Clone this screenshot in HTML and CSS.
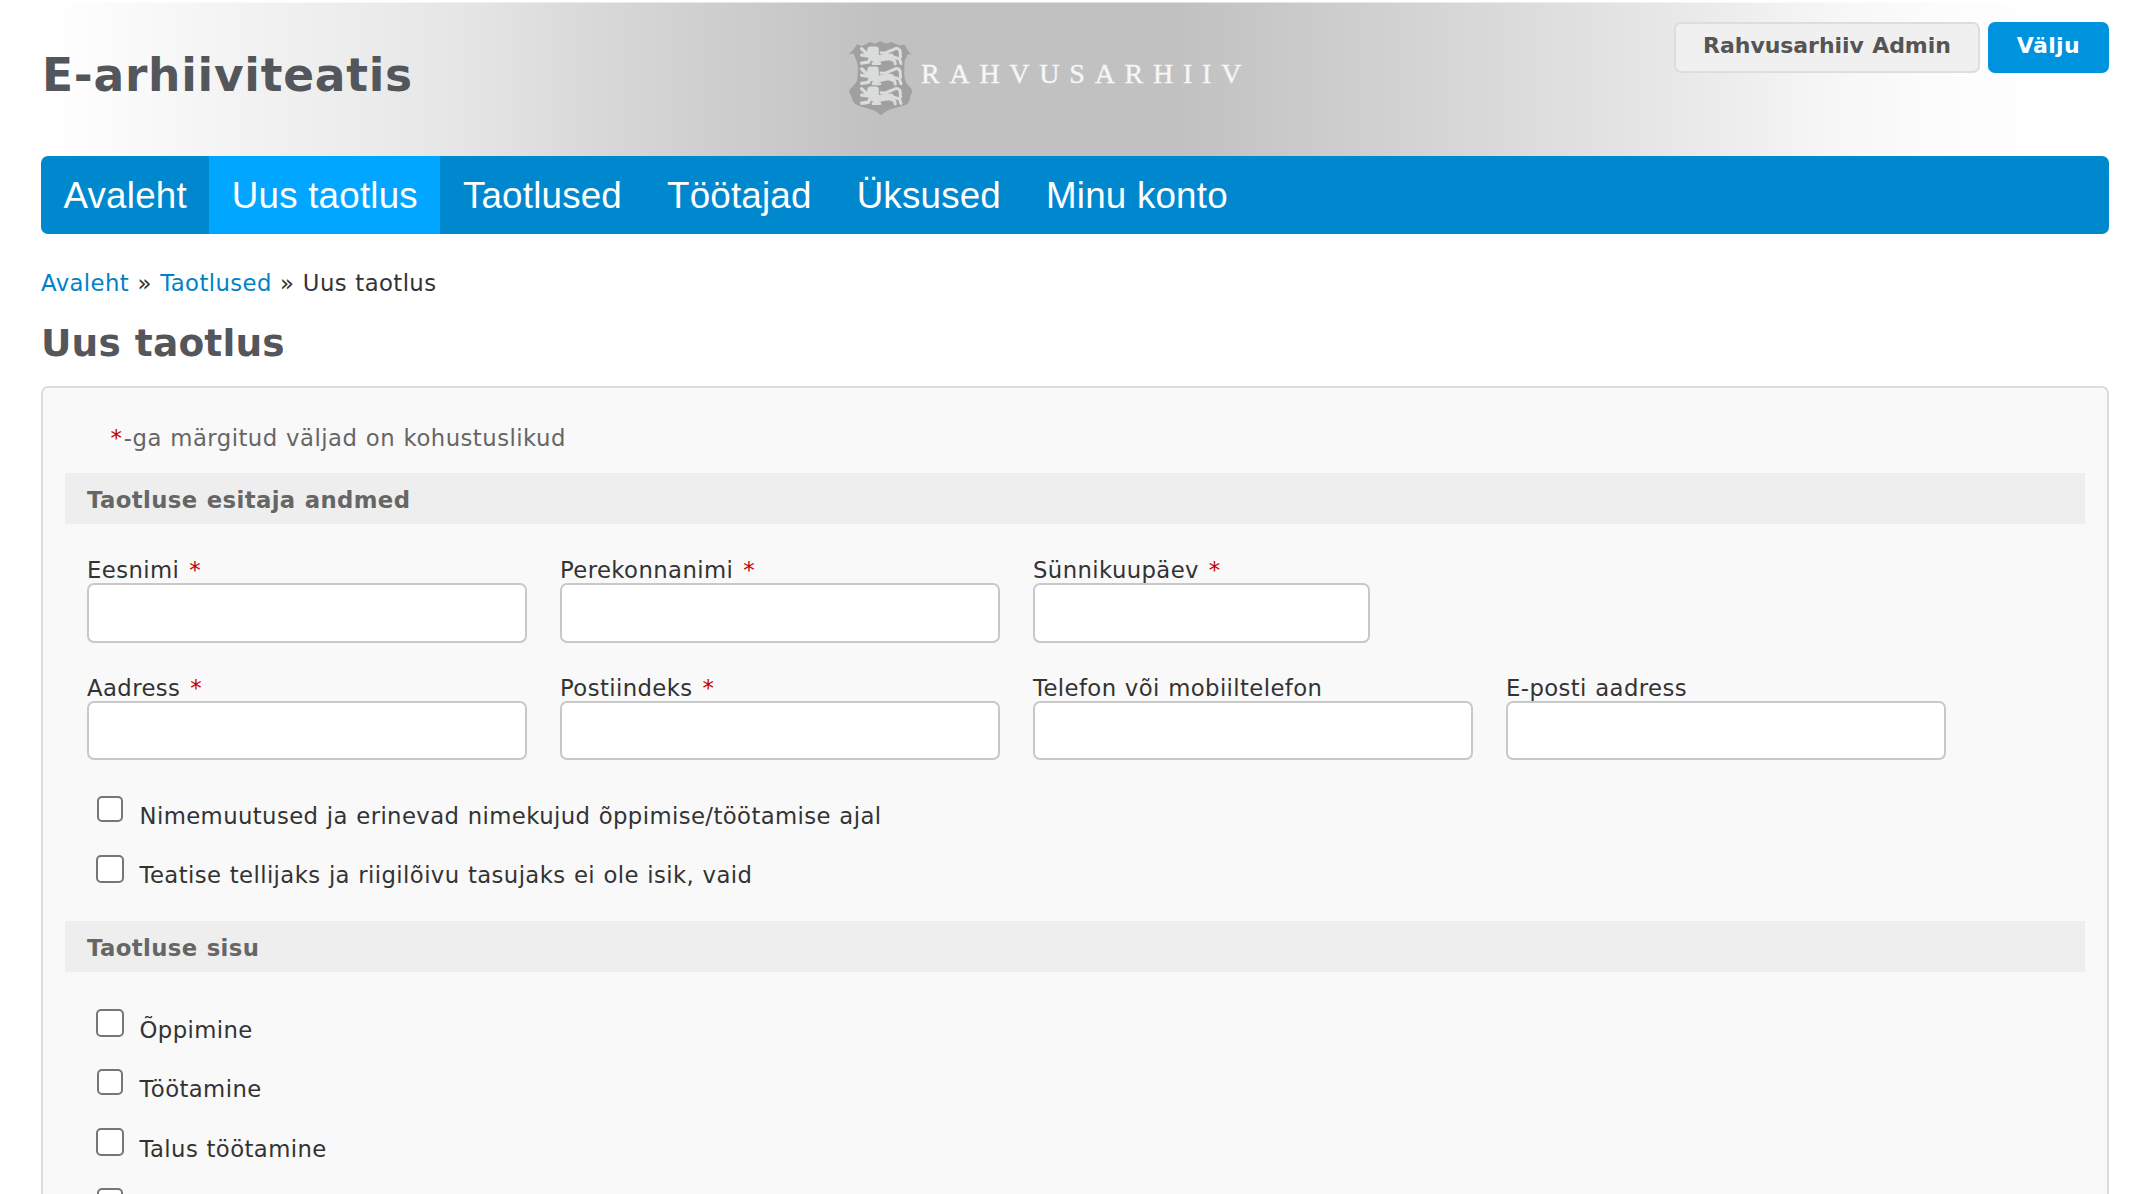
FILE: index.html
```html
<!DOCTYPE html>
<html lang="et">
<head>
<meta charset="utf-8">
<title>E-arhiiviteatis</title>
<link rel="stylesheet" href="styles.css">
</head>
<body>
<header class="header">
  <h1 class="site-title">E-arhiiviteatis</h1>
  <div class="logo">
    <svg class="shield" viewBox="80 62 204 226" aria-hidden="true">
      <defs>
        <g id="lion" fill="none" stroke="#dadcdc" stroke-linecap="round" stroke-linejoin="round">
          <path d="M152 90 H168 V106 H150 Z" stroke-width="18"/>
          <path d="M146 104 C138 100 134 98 126 88 M150 110 L126 107 M155 110 L146 128 L126 131" stroke-width="10"/>
          <path d="M158 114 C172 124 186 112 212 112" stroke-width="20"/>
          <path d="M172 124 L160 132 L180 132 M206 116 L224 124 L226 133 M216 112 L238 118 L243 132" stroke-width="9"/>
          <path d="M184 100 C198 104 204 96 214 93 C226 90 226 84 234 88 C246 94 238 102 242 112" stroke-width="9"/>
        </g>
      </defs>
      <path fill="#a0a0a0" d="M82 108 C94 100 104 90 112 75 L128 80 L150 68 L165 73 L182 66 L200 73 L214 68 L238 78 L254 76 C260 90 268 100 282 112 C274 105 268 104 264 104 L254 122 C252 150 250 178 262 194 C272 204 277 210 276 217 C268 232 272 242 262 252 C240 264 205 262 184 286 C163 264 128 264 106 252 C96 242 98 230 88 216 C90 206 104 198 112 184 C116 160 116 136 110 122 L102 103 C94 102 88 104 82 108 Z"/>
      <use href="#lion"/>
      <use href="#lion" y="60"/>
      <use href="#lion" y="119"/>
    </svg>
    <span class="logo-text">RAHVUSARHIIV</span>
  </div>
  <div class="user">
    <a class="btn">Rahvusarhiiv Admin</a>
    <a class="btn btn-primary">Välju</a>
  </div>
</header>
<nav class="nav">
  <a>Avaleht</a>
  <a class="active">Uus taotlus</a>
  <a>Taotlused</a>
  <a>Töötajad</a>
  <a>Üksused</a>
  <a>Minu konto</a>
</nav>
<div class="crumbs"><a>Avaleht</a> » <a>Taotlused</a> » <span>Uus taotlus</span></div>
<h2 class="page-title">Uus taotlus</h2>
<form class="panel">
  <p class="note"><i>*</i>-ga märgitud väljad on kohustuslikud</p>
  <h3 class="section">Taotluse esitaja andmed</h3>
  <div class="fields person">
    <label>Eesnimi <i>*</i><input type="text"></label>
    <label>Perekonnanimi <i>*</i><input type="text"></label>
    <label>Sünnikuupäev <i>*</i><input class="short" type="text"></label>
  </div>
  <div class="fields">
    <label>Aadress <i>*</i><input type="text"></label>
    <label>Postiindeks <i>*</i><input type="text"></label>
    <label>Telefon või mobiiltelefon<input type="text"></label>
    <label>E-posti aadress<input type="text"></label>
  </div>
  <div class="checks applicant">
    <label><input type="checkbox" class="small"><span>Nimemuutused ja erinevad nimekujud õppimise/töötamise ajal</span></label>
    <label><input type="checkbox"><span>Teatise tellijaks ja riigilõivu tasujaks ei ole isik, vaid</span></label>
  </div>
  <h3 class="section">Taotluse sisu</h3>
  <div class="checks content">
    <label><input type="checkbox"><span>Õppimine</span></label>
    <label><input type="checkbox" class="small"><span>Töötamine</span></label>
    <label><input type="checkbox"><span>Talus töötamine</span></label>
    <label><input type="checkbox" class="small"></label>
  </div>
</form>
</body>
</html>
```
FILE: styles.css
```css
* { box-sizing: border-box; }
html { height: 100%; }
body {
  display: flex;
  flex-direction: column;
  margin: 0;
  height: 100%;
  overflow: hidden;
  background: #fff;
  color: #333;
  font: 22.75px/28px Verdana, "DejaVu Sans", sans-serif;
  letter-spacing: .4px;
  word-spacing: .75px;
}
i { margin: 0 1.5px; color: #c00000; font-style: normal; }
.header {
  display: flex;
  flex: none;
  align-items: flex-start;
  height: 156px;
  padding: 0 41px;
  background:
    linear-gradient(rgba(255, 255, 255, .5) 3px, transparent 3px),
    linear-gradient(90deg, #fff 50px, #f5f5f5 206px, #e6e6e6 459px, #d8d8d8 597px, #cecece 720px, #c1c1c1 880px, #c1c1c1 1180px, #d2d2d2 1400px, #e5e5e5 1640px, #eee 1740px, #f7f7f7 1840px, #fcfcfc 1940px, #fff 2060px) 0 2px no-repeat;
}
.site-title {
  flex: 0 0 804px;
  margin: 0 0 0 1px;
  padding-top: 48px;
  color: #53565b;
  font-size: 45.5px;
  line-height: 56px;
  letter-spacing: .75px;
}
.logo { display: flex; padding-top: 40px; }
.shield { width: 69px; height: 76px; }
.logo-text {
  margin-left: 6px;
  padding-top: 18px;
  color: #f6f6f6;
  font: 28px/32px "Liberation Serif", serif;
  letter-spacing: 9.75px;
  -webkit-text-stroke: .4px #f6f6f6;
}
.user { display: flex; gap: 8px; margin-left: auto; padding-top: 22px; }
.btn {
  height: 51px;
  padding: 8px 27px;
  border: 2px solid #ddd;
  border-radius: 7px;
  background: #f0f0f0;
  color: #555;
  font-size: 22px;
  font-weight: bold;
  letter-spacing: -.05px;
}
.btn-primary {
  border-color: #0093dd;
  background: #0093dd;
  color: #fff;
  letter-spacing: .35px;
}
.nav {
  display: flex;
  flex: none;
  height: 78px;
  margin: 0 41px;
  overflow: hidden;
  border-radius: 7px;
  background: #0088cf;
  color: #fff;
  font: 36.75px/80px "Liberation Sans", Arial, sans-serif;
  letter-spacing: .2px;
  word-spacing: 0;
}
.nav a { padding: 0 22.5px; }
.nav .active { background: #00a6ff; }
.crumbs { margin: 35px 41px 0; }
.crumbs a { color: #0082c8; }
.page-title {
  margin: 22px 41px 0;
  color: #53565b;
  font-size: 37.5px;
  line-height: 48px;
  letter-spacing: .15px;
}
.panel {
  flex: 1;
  min-height: 0;
  margin: 19px 41px 0;
  padding: 36px 22px 0;
  overflow: hidden;
  border: 2px solid #ddd;
  border-bottom: 0;
  border-radius: 7px 7px 0 0;
  background: #f9f9f9;
}
.note { margin: 0 0 21px 44px; color: #666; letter-spacing: .47px; }
.section {
  height: 51px;
  margin: 0;
  padding-left: 22px;
  background: #eee;
  color: #666;
  font-size: 22.75px;
  line-height: 54px;
  letter-spacing: .4px;
}
.fields {
  display: flex;
  gap: 33px;
  padding: 32px 22px 0;
  line-height: 26px;
}
.fields.person { padding-top: 33px; }
.fields label { width: 440px; }
.fields input {
  display: block;
  width: 440px;
  height: 59px;
  margin: 0;
  border: 2px solid #c8c8c8;
  border-radius: 7px;
  background: #fff;
}
.fields.person input { height: 60px; }
.fields .short { width: 337px; }
.checks { padding: 36px 31px 6px; }
.checks.content { padding-top: 37px; }
.checks label { display: flex; height: 59.5px; }
.checks.applicant label { height: 59px; }
.checks.applicant { padding-bottom: 7px; }
.checks input {
  appearance: none;
  flex: none;
  width: 28px;
  height: 28px;
  margin: 0 15.5px 0 0;
  border: 2px solid #767676;
  border-radius: 5px;
  background: #fff;
}
.checks .small { width: 26px; height: 26px; margin: 0 16.5px 0 1px; }
.checks span { padding-top: 6px; }
.checks.content span { padding-top: 6.5px; }
.fields .short { width: 337px; }
```
